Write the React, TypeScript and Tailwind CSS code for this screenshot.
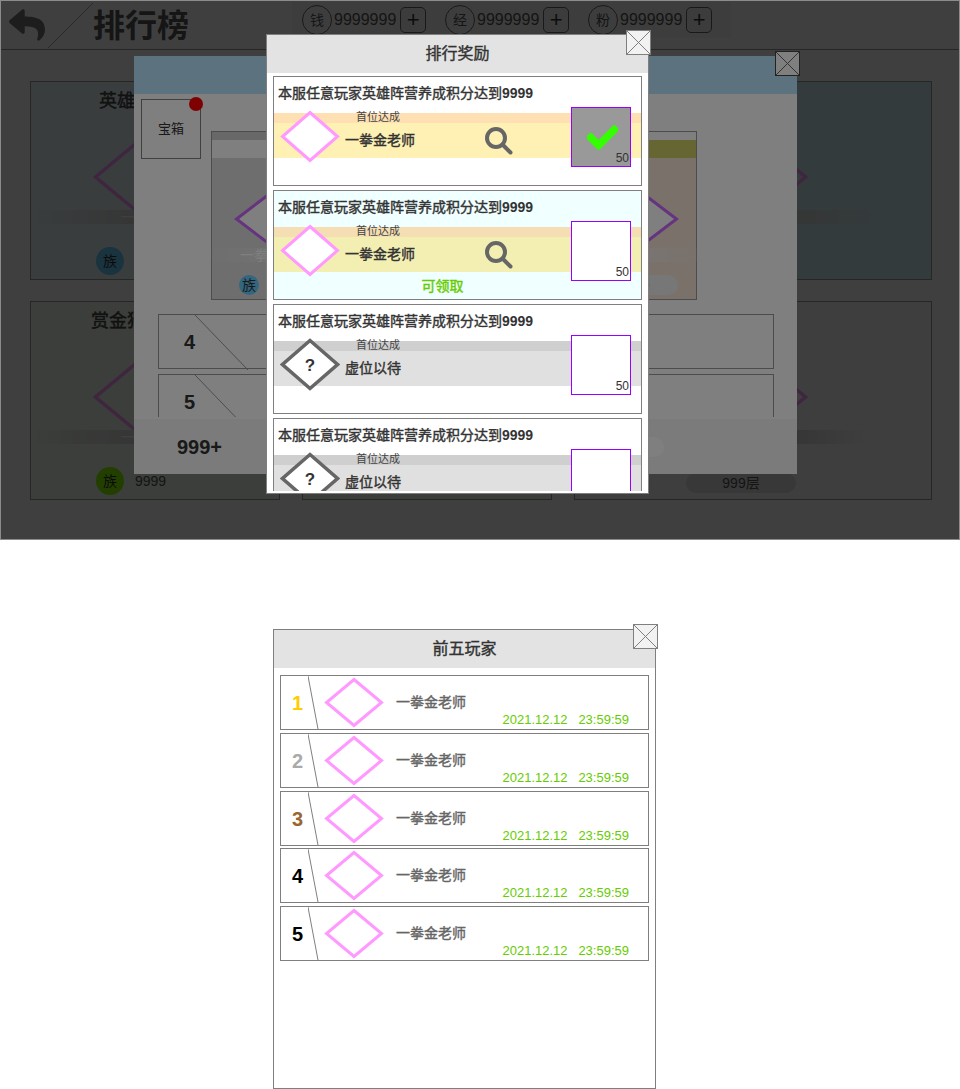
import React from "react";
import { FaCheck, FaReply } from "react-icons/fa";

const FONT = "font-['Liberation_Sans','Noto_Sans_CJK_SC',sans-serif]";
// the reference's CJK bold is a thickened regular face
const THICK = "[-webkit-text-stroke:0.4px]";

const Diamond = ({
  w,
  h,
  stroke = "#ff99ff",
  sw = 3,
  fill = "#ffffff",
  className = "",
  children,
}: {
  w: number;
  h: number;
  stroke?: string;
  sw?: number;
  fill?: string;
  className?: string;
  children?: React.ReactNode;
}) => (
  <div className={`relative shrink-0 flex items-center justify-center ${className}`} style={{ width: w, height: h }}>
    <svg width={w} height={h} className="absolute inset-0">
      <polygon
        points={`${w / 2},2.5 ${w - 2.5},${h / 2} ${w / 2},${h - 2.5} 2.5,${h / 2}`}
        fill={fill}
        stroke={stroke}
        strokeWidth={sw}
      />
    </svg>
    {children}
  </div>
);

const CloseBox = ({ className = "" }: { className?: string }) => (
  <div className={`absolute w-[25px] h-[25px] bg-[#f2f2f2] border border-[#7f7f7f] ${className}`}>
    <svg width="23" height="23">
      <line x1="0" y1="0" x2="23" y2="23" stroke="#7f7f7f" />
      <line x1="23" y1="0" x2="0" y2="23" stroke="#7f7f7f" />
    </svg>
  </div>
);

const Currency = ({ label }: { label: string }) => (
  <div className="flex shrink-0 items-center w-[143px]">
    <div className="w-[30px] h-[30px] rounded-full border border-[#666] flex items-center justify-center text-[14px] text-[#555]">
      {label}
    </div>
    <span className="ml-[2px] text-[16px] text-[#555]">9999999</span>
    <div className="ml-[4px] w-[26px] h-[26px] rounded-[5px] border border-[#666] bg-[#f2f2f2] flex items-center justify-center text-[22px] leading-none text-[#333]">
      +
    </div>
  </div>
);

type CardProps = {
  bg: string;
  width: string;
  title?: string;
  titleLeft?: number;
  tipLeft: number;
  barClass: string;
  barText?: boolean;
  circle?: string;
  score?: boolean;
  pill?: boolean;
};

const RankCard = ({ bg, width, title, titleLeft, tipLeft, barClass, barText, circle, score, pill }: CardProps) => (
  <div className={`relative h-[199px] border border-[#999] ${bg} ${width}`}>
    {title && (
      <div className={`absolute top-[6px] text-[18px] text-[#444] ${THICK}`} style={{ left: titleLeft }}>
        {title}
      </div>
    )}
    <div className="absolute top-[20px]" style={{ left: tipLeft }}>
      <Diamond w={180} h={150} stroke="#ff99ff" sw={3.5} fill="transparent" />
    </div>
    <div className={`absolute top-[128px] h-[14px] flex items-center text-[14px] text-white ${barClass}`}>
      {barText && <span className="ml-[85px]">一拳金老师</span>}
    </div>
    {circle && (
      <div className="absolute left-[65px] top-[165px] flex items-center">
        <div className={`w-[28px] h-[28px] rounded-full ${circle} flex items-center justify-center text-[14px] text-[#333]`}>
          族
        </div>
        {score && <span className="ml-[11px] text-[14px] text-[#555]">9999</span>}
      </div>
    )}
    {pill && (
      <div className="absolute right-[135px] top-[171px] w-[110px] h-[20px] rounded-full bg-[#e0e0e0] flex items-center justify-center text-[14px] text-[#555]">
        999层
      </div>
    )}
  </div>
);

const Podium = ({ tip, strip, body, left }: { tip: number; strip: string; body: string; left?: boolean }) => (
  <div className={`relative w-[168px] h-[169px] border border-[#999] ${body}`}>
    <div className={`h-[8px] ${left ? "bg-[#d0d0d0]" : "bg-white"}`} />
    <div className={`h-[18px] ${strip}`} />
    <div className="absolute top-[37px]" style={{ left: tip }}>
      <Diamond w={130} h={100} stroke="#cc66ff" sw={3} fill="#ffffff" />
    </div>
    <div
      className={`absolute top-[116px] h-[14px] flex items-center text-[14px] text-white ${
        left
          ? "left-[-12px] w-[170px] pl-[40px] bg-linear-to-r from-transparent to-[#f0f0f0]"
          : "right-[-14px] w-[110px] pl-[4px] bg-linear-to-r from-[#f0f0f0] to-transparent"
      }`}
    >
      {left ? "一拳" : "老师"}
    </div>
    {left ? (
      <div className="absolute left-[27px] top-[143px] w-[20px] h-[20px] rounded-full bg-[#66ccff] flex items-center justify-center text-[14px] text-[#333]">
        族
      </div>
    ) : (
      <div className="absolute right-[18px] top-[143px] flex w-[88px] h-[20px] items-center justify-center rounded-full bg-[#eeeeee] text-[14px] text-[#333]">
        9999
      </div>
    )}
  </div>
);

const RankRow = ({ n, clipX }: { n: string; clipX: number }) => (
  <div className="relative h-[55px] shrink-0 border border-[#999]">
    <svg width="60" height="55" className="absolute left-[36px] top-0">
      <line x1="0" y1="0" x2={clipX} y2="55" stroke="#999" />
    </svg>
    <div className="absolute left-[25px] top-0 h-full flex items-center text-[20px] font-bold text-[#333]">{n}</div>
  </div>
);

const SearchGlyph = () => (
  <svg width="28" height="28" viewBox="0 0 28 28" fill="none" stroke="#666" className="shrink-0">
    <circle cx="11" cy="11" r="9" strokeWidth="4" />
    <line x1="18" y1="18" x2="25.5" y2="25.5" strokeWidth="4" strokeLinecap="round" />
  </svg>
);

type RewardProps = {
  bg?: string;
  top: string;
  band: string;
  reached: boolean;
  checked?: boolean;
  claim?: boolean;
};

const RewardItem = ({ bg = "bg-white", top, band, reached, checked, claim }: RewardProps) => (
  <div className={`relative h-[110px] shrink-0 border border-[#7f7f7f] ${bg}`}>
    <div className="pl-[4px] pt-[7px] text-[14px] leading-[19px] text-[#333]">
      <span className={THICK}>本服任意玩家英雄阵营养成积分达到</span>
      <span className="font-bold">9999</span>
    </div>
    <div className={`mt-[10px] h-[10px] ${top}`} />
    <div className={`h-[35px] ${band} flex items-center`}>
      <span className={`ml-[71px] text-[14px] text-[#333] ${THICK} ${reached ? "w-[140px]" : ""}`}>
        {reached ? "一拳金老师" : "虚位以待"}
      </span>
      {reached && <SearchGlyph />}
    </div>
    <div className="absolute left-[82px] top-[33px] text-[11px] leading-[14px] text-[#444]">首位达成</div>
    <div className="absolute left-[6px] top-[33px]">
      {reached ? (
        <Diamond w={60} h={53} />
      ) : (
        <Diamond w={60} h={53} stroke="#666" sw={3.5}>
          <span className="relative mt-[2px] text-[17px] font-bold text-[#333]">?</span>
        </Diamond>
      )}
    </div>
    <div
      className={`absolute left-[297px] top-[30px] w-[60px] h-[60px] border border-[#9900ff] flex items-center justify-center ${
        checked ? "bg-[#999999]" : "bg-white"
      }`}
    >
      {checked && <FaCheck size={31} color="#33ff00" stroke="#33ff00" strokeWidth={24} className="ml-[3px]" />}
      <span className="absolute right-[1px] bottom-[1px] text-[12px] leading-[14px] text-[#333]">50</span>
    </div>
    {claim && (
      <div className={`absolute left-0 right-[30px] bottom-[5px] text-center text-[14px] leading-[16px] text-[#66cc00] ${THICK}`}>
        可领取
      </div>
    )}
  </div>
);

const TopFiveRow = ({ n, color }: { n: string; color: string }) => (
  <div className="relative h-[55px] border border-[#7f7f7f] flex items-center">
    <svg width="12" height="53" className="absolute left-[27px] top-0">
      <line x1="0" y1="0" x2="10" y2="53" stroke="#7f7f7f" />
    </svg>
    <span className={`ml-[11px] mt-[1px] w-[32px] text-[20px] font-bold ${color}`}>{n}</span>
    <Diamond w={60} h={51} />
    <span className={`ml-[12px] text-[14px] text-[#666] ${THICK}`}>一拳金老师</span>
    <span className="absolute right-[19px] bottom-[2px] text-[13px] leading-[14px] whitespace-pre text-[#66cc00]">
      2021.12.12{"   "}23:59:59
    </span>
  </div>
);

export default function App() {
  return (
    <div className={`w-[960px] h-[1089px] bg-white ${FONT}`}>
      <div className="relative h-[540px] border border-[#8c8c8c]">
        <div className="relative h-full overflow-hidden bg-white">
          {/* page under the dialogs */}
          <div className="flex h-[49px] items-center border-b border-[#999]">
            <FaReply size={36} color="#777" className="ml-[8px] shrink-0" />
            <svg width="46" height="48" className="ml-[3px] shrink-0">
              <line x1="0" y1="47" x2="45" y2="2" stroke="#aaa" />
            </svg>
            <h1 className="ml-[-1px] mt-[2px] w-[199px] text-[32px] font-bold text-[#555]">排行榜</h1>
            <div className="mb-[10px] flex h-[36px] w-[439px] items-center bg-[#f5f5f5] pl-[10px]">
              <Currency label="钱" />
              <Currency label="经" />
              <Currency label="粉" />
            </div>
          </div>
          <div className="flex flex-col gap-[21px] pl-[29px] pt-[31px]">
            <div className="flex gap-[22px]">
              <RankCard
                bg="bg-[#e4f4f8]"
                width="w-[522px]"
                title="英雄榜"
                titleLeft={68}
                tipLeft={62}
                barClass="left-[5px] w-[250px] bg-linear-to-r from-transparent to-[#d8d8d8] to-40%"
                barText
                circle="bg-[#66ccff]"
              />
              <RankCard
                bg="bg-[#d0ecf0]"
                width="w-[358px]"
                tipLeft={53}
                barClass="right-[60px] w-[200px] bg-linear-to-r from-[#d8d8d8] from-60% to-transparent"
              />
            </div>
            <div className="flex gap-[22px]">
              <RankCard
                bg="bg-[#eef8e8]"
                width="w-[250px]"
                title="赏金猎"
                titleLeft={60}
                tipLeft={62}
                barClass="left-[5px] w-[240px] bg-linear-to-r from-transparent to-[#d8d8d8] to-40%"
                barText
                circle="bg-[#88ff00]"
                score
              />
              <RankCard bg="bg-[#eef8e8]" width="w-[250px]" tipLeft={35} barClass="left-0 w-full bg-[#d8d8d8]" />
              <RankCard
                bg="bg-[#fbfbff]"
                width="w-[358px]"
                tipLeft={53}
                barClass="right-[60px] w-[200px] bg-linear-to-r from-[#d8d8d8] from-60% to-transparent"
                pill
              />
            </div>
          </div>

          {/* first dim layer */}
          <div className="absolute inset-0 bg-black/50" />

          {/* rank dialog */}
          <div className="absolute left-[133px] top-[55px] flex h-[418px] w-[663px] flex-col bg-white">
            <div className="h-[38px] shrink-0 bg-[#b9e6ff]" />
            <div className="flex h-[323px] shrink-0 flex-col overflow-hidden">
              <div className="flex justify-between pl-[77px] pr-[100px] pt-[37px]">
                <Podium tip={22} strip="bg-white" body="bg-[#dcdcdc]" left />
                <Podium tip={19} strip="bg-[#cccc66]" body="bg-[#f4e2d4]" />
              </div>
              <div className="ml-[24px] mr-[23px] mt-[14px] flex flex-col gap-[5px]">
                <RankRow n="4" clipX={53} />
                <RankRow n="5" clipX={53} />
              </div>
            </div>
            <div className="mt-[2px] flex h-[55px] shrink-0 items-center bg-[#f6f6f6] pl-[43px]">
              <span className="text-[20px] font-bold text-[#333]">999+</span>
              <div className="ml-[418px] h-[20px] w-[24px] rounded-r-full bg-white" />
            </div>
            <div className="absolute left-[641px] top-[-5px] w-[25px] h-[25px] border border-[#444] bg-white">
              <svg width="23" height="23">
                <line x1="0" y1="0" x2="23" y2="23" stroke="#666" />
                <line x1="23" y1="0" x2="0" y2="23" stroke="#666" />
              </svg>
            </div>
            <div className="absolute left-[7px] top-[43px] flex h-[60px] w-[60px] items-center justify-center border border-[#808080] text-[13px] text-[#333]">
              宝箱
            </div>
            <div className="absolute left-[55px] top-[41px] h-[14px] w-[14px] rounded-full bg-[#ff0000]" />
          </div>

          {/* second dim layer */}
          <div className="absolute inset-0 bg-black/50" />

          {/* reward dialog */}
          <div className="absolute left-[265px] top-[33px] flex h-[460px] w-[383px] flex-col border border-[#7f7f7f] bg-white">
            <div className={`flex h-[38px] shrink-0 items-center justify-center bg-[#e3e3e3] text-[16px] text-[#333] ${THICK}`}>
              排行奖励
            </div>
            <div className="mx-[6px] mt-[3px] flex h-[415px] flex-col gap-[4px] overflow-hidden">
              <RewardItem top="bg-[#ffe0b3]" band="bg-[#fff0b3]" reached checked />
              <RewardItem bg="bg-[#f0ffff]" top="bg-[#f5deb3]" band="bg-[#f3efb3]" reached claim />
              <RewardItem top="bg-[#cfcfcf]" band="bg-[#e0e0e0]" reached={false} />
              <RewardItem top="bg-[#cfcfcf]" band="bg-[#e0e0e0]" reached={false} />
            </div>
            <CloseBox className="left-[359px] top-[-5px]" />
          </div>
        </div>
      </div>

      {/* top five dialog */}
      <div className="relative ml-[273px] mt-[89px] h-[460px] w-[383px] border border-[#7f7f7f] bg-white">
        <div className={`flex h-[38px] items-center justify-center bg-[#e3e3e3] text-[16px] text-[#333] ${THICK}`}>
          前五玩家
        </div>
        <div className="mx-[6px] mt-[7px] flex flex-col gap-[2.8px]">
          <TopFiveRow n="1" color="text-[#ffcc00]" />
          <TopFiveRow n="2" color="text-[#aaaaaa]" />
          <TopFiveRow n="3" color="text-[#996633]" />
          <TopFiveRow n="4" color="text-black" />
          <TopFiveRow n="5" color="text-black" />
        </div>
        <CloseBox className="left-[359px] top-[-6px]" />
      </div>
    </div>
  );
}
